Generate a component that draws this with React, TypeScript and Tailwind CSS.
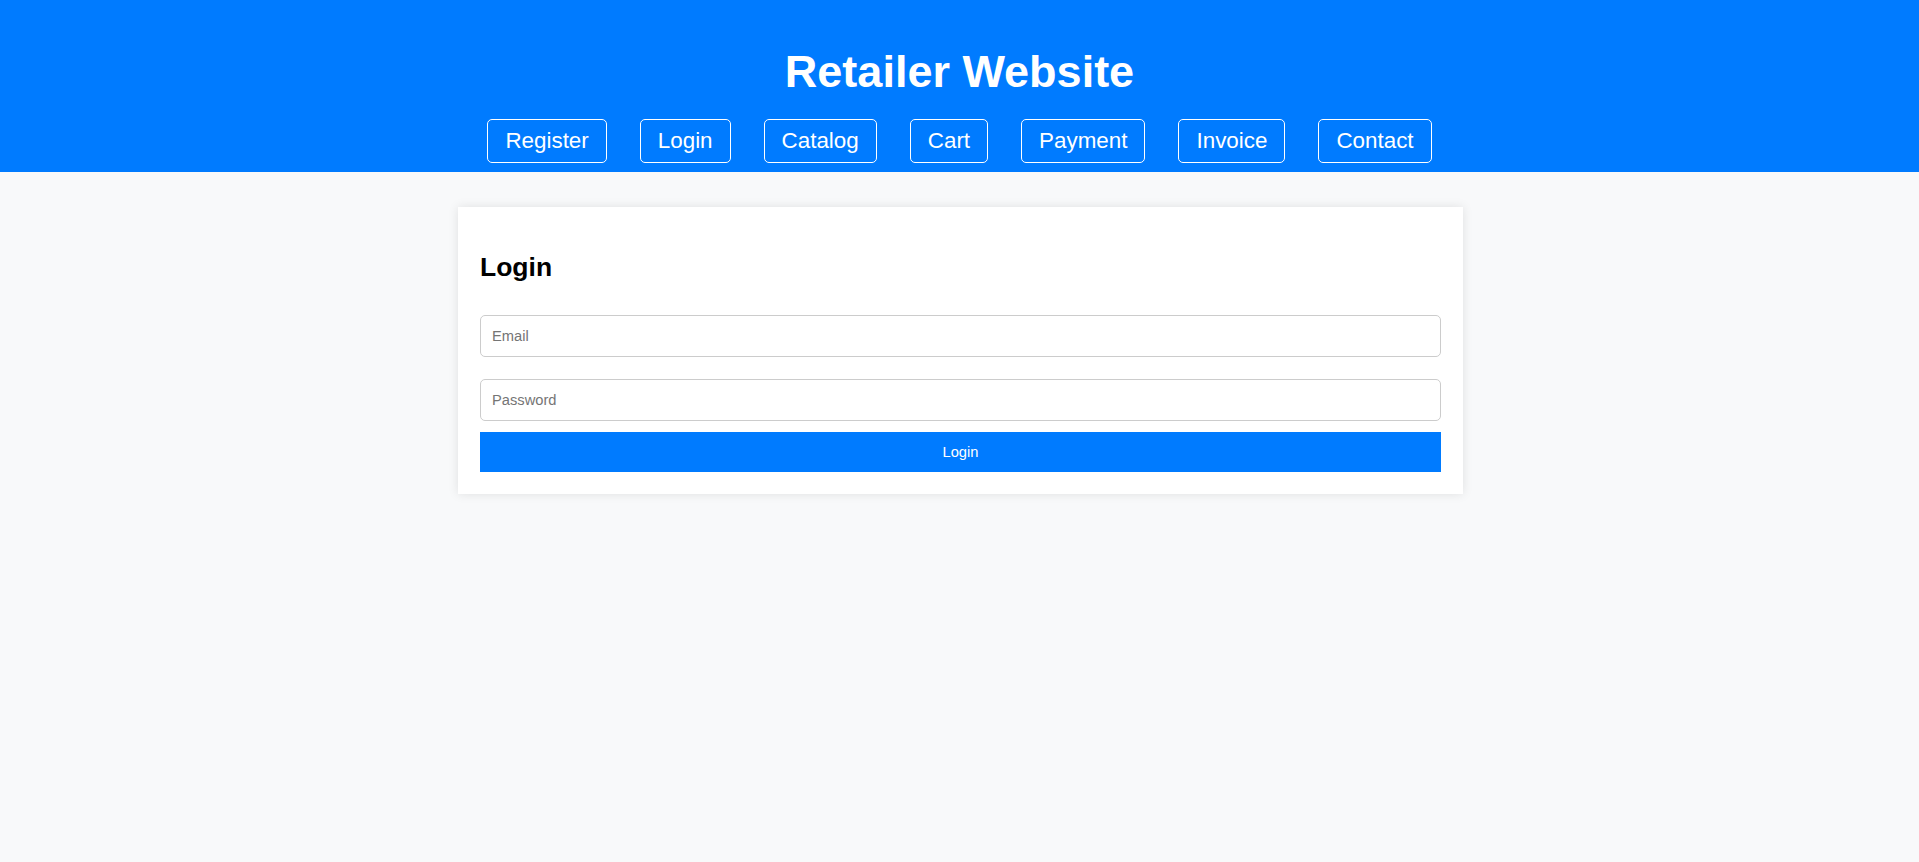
import React from "react";

const links = ["Register", "Login", "Catalog", "Cart", "Payment", "Invoice", "Contact"];

export default function App() {
  return (
    <div
      className="min-h-[862px] bg-[#f8f9fa]"
      style={{ fontFamily: '"Liberation Sans", Arial, sans-serif' }}
    >
      <header className="bg-[#007bff] pt-[47px] pb-[9px] text-white">
        <h1 className="text-center text-[45px] leading-[50px] font-bold">Retailer Website</h1>
        <nav className="mt-[22px] flex justify-center gap-[33px]">
          {links.map((l) => (
            <a
              key={l}
              href="#"
              className="rounded-[5px] border border-white px-[17px] py-[8px] text-[22.4px] leading-[26px] text-white"
            >
              {l}
            </a>
          ))}
        </nav>
      </header>
      <main className="flex justify-center pt-[35px]">
        <div className="ml-[2px] w-[1005px] bg-white px-[22px] pt-[22px] pb-[22px] shadow-[0_0_10px_rgba(0,0,0,0.1)]">
          <h2 className="mt-[23px] text-[26.5px] leading-[30px] font-bold text-black">Login</h2>
          <form className="mt-[33px] flex flex-col" onSubmit={(e) => e.preventDefault()}>
            <input
              type="email"
              placeholder="Email"
              className="h-[42px] w-full rounded-[5px] border border-[#ccc] bg-white px-[11px] text-[14.7px] outline-none placeholder:text-[#757575]"
            />
            <input
              type="password"
              placeholder="Password"
              className="mt-[22px] h-[42px] w-full rounded-[5px] border border-[#ccc] bg-white px-[11px] text-[14.7px] outline-none placeholder:text-[#757575]"
            />
            <button
              type="submit"
              className="mt-[11px] h-[40px] w-full bg-[#007bff] text-[14.7px] text-white"
            >
              Login
            </button>
          </form>
        </div>
      </main>
    </div>
  );
}
